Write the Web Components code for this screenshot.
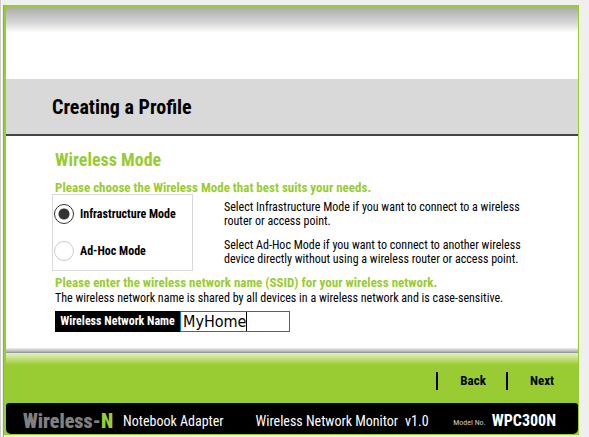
<!DOCTYPE html>
<html lang="en">
<head>
<meta charset="utf-8">
<title>Creating a Profile</title>
<style>
html, body { margin: 0; }
body {
  --green: #9c3;
  font-family: "Roboto Condensed", "Liberation Sans", sans-serif;
  font-size: 12px; line-height: 14px; color: #000; background: #efefef;
}
</style>
</head>
<body>
<profile-wizard></profile-wizard>
<script>
function define(name, html) {
  const template = document.createElement('template');
  template.innerHTML = html;
  customElements.define(name, class extends HTMLElement {
    constructor() {
      super();
      this.attachShadow({ mode: 'open' }).append(template.content.cloneNode(true));
    }
  });
}

define('page-header', `
<style>
:host { display: block; background: linear-gradient(#aaa, #d8d8d8 16px, #fff 26px); padding-top: 72px; border-radius: 5px 5px 0 0; }
h1 { margin: 0; padding: 17px 46px 16px; font-size: 20px; line-height: 22px; font-weight: bold; background: #d9d9d9; border-bottom: 2px solid #444; }
</style>
<h1><slot></slot></h1>`);

define('mode-picker', `
<style>
:host { display: grid; grid-template-columns: 141px minmax(0, 310px); column-gap: 31px; margin-left: -3px; }
fieldset { margin: 0; padding: 9px 1px; border: 1px solid #d9d9d9; min-width: 0; display: grid; gap: 17px; align-content: start; }
label { display: flex; align-items: center; gap: 6px; font-weight: bold; white-space: nowrap; }
input { appearance: none; box-sizing: border-box; width: 20px; height: 20px; margin: 0; border: 1px solid #ccc; border-radius: 50%; }
input:checked { border-color: #333; background: radial-gradient(circle, #333 5px, #fff 6px); }
.notes { padding-top: 6px; display: grid; gap: 10px; align-content: start; }
p { margin: 0; }
</style>
<fieldset aria-label="Wireless Mode">
  <label><input type="radio" name="mode" checked>Infrastructure Mode</label>
  <label><input type="radio" name="mode">Ad-Hoc Mode</label>
</fieldset>
<div class="notes">
  <p>Select Infrastructure Mode if you want to connect to a wireless<br>router or access point.</p>
  <p>Select Ad-Hoc Mode if you want to connect to another wireless<br>device directly without using a wireless router or access point.</p>
</div>`);

define('ssid-field', `
<style>
:host { display: flex; height: 21px; }
label { box-sizing: border-box; width: 125px; background: #000; color: #fff; font-weight: bold; line-height: 20px; text-align: center; white-space: nowrap; }
.box { box-sizing: border-box; width: 110px; display: flex; align-items: center; border: 1px solid #0078d7; background: #fff; }
input { field-sizing: content; min-width: 10px; box-sizing: border-box; height: 19px; padding: 0 0 0 2px; border: 0; border-right: 1px solid #000; outline: 0; background: none; font: 16px "DejaVu Sans Condensed", "Noto Sans", sans-serif; color: #000; }
</style>
<label for="ssid">Wireless Network Name</label>
<div class="box"><input id="ssid" type="text" value="MyHome"></div>`);

define('wizard-nav', `
<style>
:host { display: flex; justify-content: flex-end; align-items: center; gap: 20px; box-sizing: border-box; height: 50px; padding: 5px 24px 0 0; background: linear-gradient(#e4f2c4, var(--green) 12px); }
button { border: 0; padding: 0; background: none; font: inherit; font-size: 13px; font-weight: bold; color: #000; border-left: 2px solid #000; height: 18px; padding-left: 22px; }
</style>
<button type="button">Back</button>
<button type="button">Next</button>`);

define('product-bar', `
<style>
:host { display: flex; align-items: center; box-sizing: border-box; height: 31px; padding: 5px 22px 0 17px; background: #000; color: #fff; font-size: 14px; line-height: 20px; white-space: nowrap; border-radius: 3px 3px 5px 5px; }
.brand { font-size: 20px; font-weight: 900; color: #808080; margin-right: 10px; }
.brand b { color: var(--green); font-weight: 900; }
.monitor { margin-left: 32px; }
.version { margin-left: 7px; }
small { margin-left: auto; font-size: 8px; color: #ccc; padding-top: 4px; }
.model { margin-left: 6px; font-size: 16px; font-weight: bold; }
</style>
<span class="brand">Wireless-<b>N</b></span>
<span>Notebook Adapter</span>
<span class="monitor">Wireless Network Monitor</span>
<span class="version">v1.0</span>
<small>Model No.</small>
<span class="model">WPC300N</span>`);

define('profile-wizard', `
<style>
:host { display: flex; box-sizing: border-box; min-height: 100vh; padding: 5px 10px 0 3px; background: linear-gradient(90deg, #ccc 1px, #fff 1px 2px, #efefef 2px 3px, transparent 3px); }
.edge { flex: 1; min-width: 0; display: flex; flex-direction: column; border-left: 1px solid #999; padding-bottom: 2px; }
.frame { flex: 1; display: flex; flex-direction: column; box-sizing: border-box; background: var(--green); padding: 2px 1px 1px 2px; }
main { flex: 1; padding: 14px 49px 20px; box-sizing: border-box; border-bottom: 1px solid #999; background: linear-gradient(#fff, #fff) top / 100% calc(100% - 4px) no-repeat, linear-gradient(0deg, #aaa, #eee 4px); }
h2 { margin: 0; font-size: 18px; line-height: 20px; color: var(--green); }
h3 { margin: 0; font-size: 13px; line-height: 12px; color: var(--green); }
.choose { margin-top: 12px; }
.enter { margin-top: 6px; }
p { margin: 2px 0 6px; }
</style>
<div class="edge"><div class="frame">
  <page-header>Creating a Profile</page-header>
  <main>
    <h2>Wireless Mode</h2>
    <h3 class="choose">Please choose the Wireless Mode that best suits your needs.</h3>
    <mode-picker></mode-picker>
    <h3 class="enter">Please enter the wireless network name (SSID) for your wireless network.</h3>
    <p>The wireless network name is shared by all devices in a wireless network and is case-sensitive.</p>
    <ssid-field></ssid-field>
  </main>
  <wizard-nav></wizard-nav>
  <product-bar></product-bar>
</div></div>`);
</script>
</body>
</html>
